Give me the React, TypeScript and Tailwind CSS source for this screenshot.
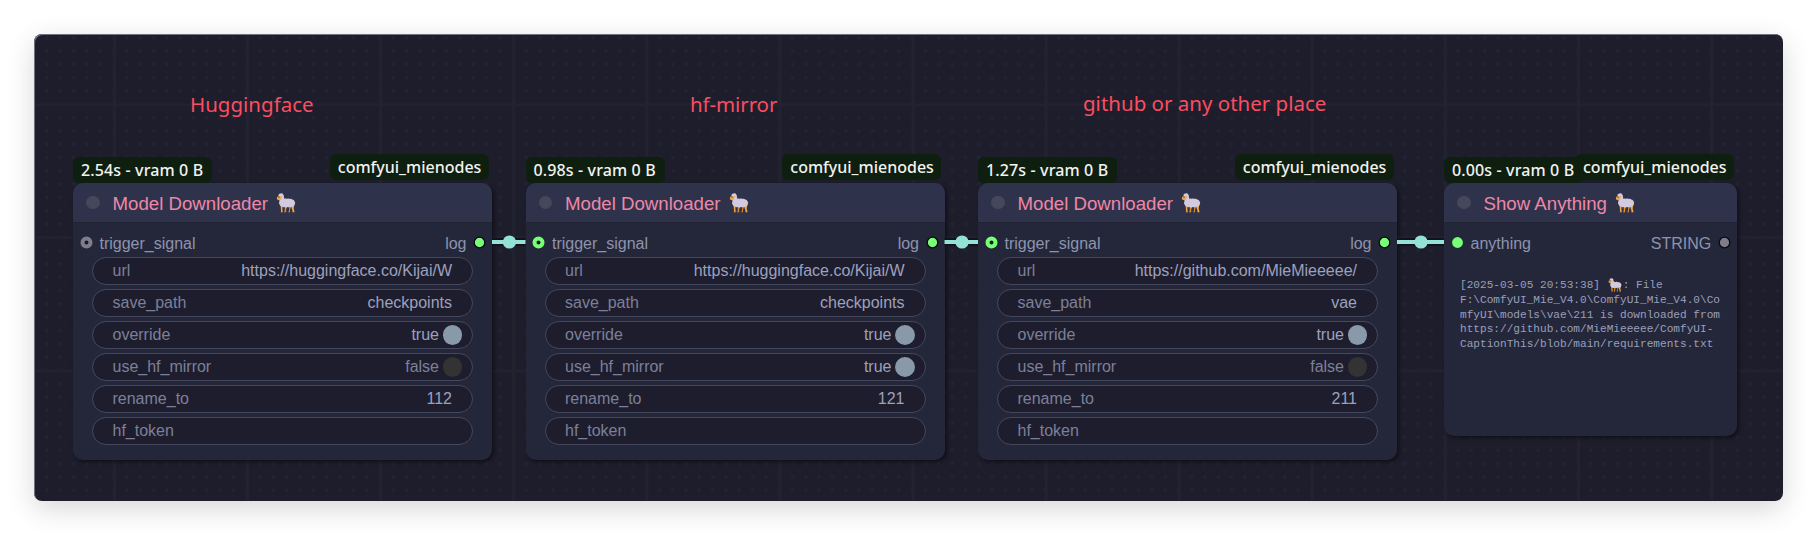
import React from "react";

const Sheep = ({ className }: { className: string }) => (
  <svg viewBox="0 0 20 20" className={className} aria-hidden="true">
    <path d="M4.600 12.500h2l-.2 3 .3 3.700H4.600l.5-.8zM14.800 12.500h3.400l-.5 3 .9 3.700h-2.300l.3-1z" fill="#f4a641" />
    <path d="M8.800 13.500h2.500l-1 2.200-.2 3.500H7.800l.9-1.200zM13.400 13.500h2l-1.300 2.700-.2 3h-1.800l.8-1.200z" fill="#e38c22" />
    <path
      d="M2.400 2.500C2.300 1.300 3.300.5 4.300.8 5.200-.1 6.800.3 7.100 1.400c.9.4 1 1.500.6 2.200.6.800.5 1.600.7 2.300.8-.5 1.700-.5 2.400 0 .9-.6 2-.6 2.800 0 1-.4 2-.2 2.600.5 1.200 0 2.100.8 2.200 1.900.9.6 1 1.800.4 2.600.2 1.200-.6 2.200-1.700 2.400-.8.900-2 1-2.900.4-.8.700-2 .8-2.800.2-.8.700-2 .7-2.800.1-1 .5-2.100.2-2.700-.6-1.200.1-2.100-.7-2.200-1.800-.8-.7-.9-1.800-.3-2.600-.3-1 0-2 .8-2.600V4z"
      fill="#d2cbdf"
    />
    <path d="M1 4.300c.4-.8 1.400-1.200 2.300-1l1.800.9c.1 1.500-.4 2.700-1.500 3-1.200.2-2.400-.2-2.700-1.100z" fill="#f4a641" />
    <path d="M4.600 3l1.700.3-.5 1.400-1.200-.3z" fill="#e7a36b" />
    <circle cx="3" cy="4.500" r=".55" fill="#5a3d28" />
  </svg>
);

const Badge = ({ children, className }: { children: React.ReactNode; className: string }) => (
  <div
    className={`absolute flex h-[26px] items-center whitespace-nowrap rounded-[6px] bg-[#0f1f0f] pb-px font-['Noto_Sans',sans-serif] text-[16px] font-medium text-[#f2f2f2] ${className}`}
  >
    {children}
  </div>
);

const Header = ({ title }: { title: string }) => (
  <div className="flex h-10 shrink-0 items-center rounded-t-[10px] border-b border-[#212334] bg-[#2f324b] pl-[13.300px]">
    <span className="size-[13.500px] rounded-full bg-[#45475a]" />
    <span className="ml-[12.700px] whitespace-nowrap pt-[2px] text-[18.660px] text-[#ee87a7]">{title}</span>
    <Sheep className="ml-[8px] mt-px size-[20px]" />
  </div>
);

type Port = "idle" | "linked" | "plain";

const InPort = ({ kind }: { kind: Port }) => (
  <svg className="size-[13px]" viewBox="-6.500 -6.500 13 13">
    {kind === "plain" ? (
      <circle r="5.400" fill="#7f7" />
    ) : (
      <circle r="4" fill="#1a1a26" stroke={kind === "linked" ? "#7f7" : "#7f7c8c"} strokeWidth="4" />
    )}
  </svg>
);

const OutPort = ({ color }: { color: string }) => (
  <svg className="size-[13px]" viewBox="-6.500 -6.500 13 13">
    <circle r="5.300" fill={color} stroke="#0a0a0e" strokeWidth="1.330" />
  </svg>
);

const Slots = ({ input, output, kind, outColor }: { input: string; output: string; kind: Port; outColor: string }) => (
  <div className="flex h-[34px] shrink-0 items-center pl-[6.800px] pr-[6px] pt-[4px] text-[16px] text-[#8e93ae]">
    <InPort kind={kind} />
    <span className="ml-[6.700px] pt-[4px]">{input}</span>
    <span className="ml-auto mr-[6.800px] pt-[4px]">{output}</span>
    <OutPort color={outColor} />
  </div>
);

const Row = ({ label, value }: { label: string; value: string | boolean }) => (
  <div className="flex h-[27.500px] items-center rounded-full border border-[#45475c] bg-[#1e1d2d] pl-[19.200px] pr-[20px] text-[16px] leading-none text-[#7c8099]">
    <span>{label}</span>
    {typeof value === "boolean" ? (
      <span className={`-mr-[10px] ml-auto flex items-center gap-[3.500px] ${value ? "text-[#9ca1bd]" : "text-[#7c8099]"}`}>
        {String(value)}
        <span className={`size-[19.500px] rounded-full ${value ? "bg-[#8899aa]" : "bg-[#333333]"}`} />
      </span>
    ) : (
      <span className="ml-auto text-[#9ca1bd]">{value}</span>
    )}
  </div>
);

interface DownloaderProps {
  className: string;
  time: string;
  kind: Port;
  url: string;
  path: string;
  mirror: boolean;
  rename: string;
}

const Downloader = ({ className, time, kind, url, path, mirror, rename }: DownloaderProps) => (
  <article
    className={`absolute top-[149px] flex h-[277px] w-[419.300px] flex-col rounded-[10px] bg-[#24273a] shadow-[2px_2px_4px_rgba(0,0,0,0.5)] ${className}`}
  >
    <Badge className="-top-[26px] left-0 w-[139px] pl-2 tracking-[0.130px]">{time} - vram 0 B</Badge>
    <Badge className="-top-[29px] right-[3.500px] w-[159px] pl-2">comfyui_mienodes</Badge>
    <Header title="Model Downloader" />
    <Slots input="trigger_signal" output="log" kind={kind} outColor="#7f7" />
    <div className="flex flex-col gap-[4.500px] px-[19.300px]">
      <Row label="url" value={url} />
      <Row label="save_path" value={path} />
      <Row label="override" value={true} />
      <Row label="use_hf_mirror" value={mirror} />
      <Row label="rename_to" value={rename} />
      <Row label="hf_token" value="" />
    </div>
  </article>
);

const Caption = ({ children, className }: { children: React.ReactNode; className: string }) => (
  <h2 className={`absolute whitespace-nowrap font-['Noto_Sans',sans-serif] text-[20.500px] leading-[28px] text-[#fb4d60] ${className}`}>
    {children}
  </h2>
);

const Grid = () => (
  <svg className="absolute left-px top-px h-[466px] w-[1748px] rounded-[8px]" aria-hidden="true">
    <defs>
      <pattern id="dots" x="5.500" y="9.300" width="13.310" height="13.310" patternUnits="userSpaceOnUse">
        <path d="M6.600 4.700v4M4.600 6.700h4" stroke="#242333" strokeWidth="1.500" />
      </pattern>
      <pattern id="lines" x="78" y="68.200" width="133.100" height="133.100" patternUnits="userSpaceOnUse">
        <path d="M1.500 0v133.100M0 1.500h133.100" stroke="#1e1d2c" strokeWidth="8" />
        <path d="M1.500 0v133.100M0 1.500h133.100" stroke="#232231" strokeWidth="2.700" />
      </pattern>
    </defs>
    <rect width="100%" height="100%" fill="url(#dots)" />
    <rect width="100%" height="100%" fill="url(#lines)" />
  </svg>
);

const links = [
  [458, 491.5, 475.4],
  [910.5, 944, 928],
  [1363, 1410, 1387],
];

const Links = () => (
  <svg className="absolute left-0 top-0 h-full w-full" aria-hidden="true">
    {links.map(([a, b, m]) => (
      <g key={a}>
        <path d={`M${a} 208H${b}`} stroke="#12121b" strokeWidth="8" />
        <path d={`M${a} 208H${b}`} stroke="#94e2d5" strokeWidth="4" />
        <circle cx={m} cy="208" r="6.600" fill="#94e2d5" />
      </g>
    ))}
  </svg>
);

export default function App() {
  return (
    <main className="h-[535px] w-[1817px] overflow-hidden bg-white pl-[34px] pt-[34px] font-['Liberation_Sans',Arial,sans-serif]">
      <section className="relative h-[467px] w-[1749px] rounded-[8px] bg-[#1e1d2c] shadow-[inset_1px_1px_0_#6d7480,0_8px_28px_rgba(0,0,0,0.16)]">
        <Grid />
        <Caption className="left-[156px] top-[56px]">Huggingface</Caption>
        <Caption className="left-[656px] top-[56px] tracking-[-0.100px]">hf-mirror</Caption>
        <Caption className="left-[1049px] top-[55px]">github or any other place</Caption>

        <Downloader className="left-[39px]" time="2.54s" kind="idle" url="https://huggingface.co/Kijai/W" path="checkpoints" mirror={false} rename="112" />
        <Downloader className="left-[491.500px]" time="0.98s" kind="linked" url="https://huggingface.co/Kijai/W" path="checkpoints" mirror={true} rename="121" />
        <Downloader className="left-[944px]" time="1.27s" kind="linked" url="https://github.com/MieMieeeee/" path="vae" mirror={false} rename="211" />

        <article className="absolute left-[1410px] top-[149px] flex h-[253px] w-[293px] flex-col rounded-[10px] bg-[#24273a] shadow-[2px_2px_4px_rgba(0,0,0,0.5)]">
          <Badge className="-top-[26px] left-0 w-[139px] pl-2 tracking-[0.130px]">0.00s - vram 0 B</Badge>
          <Badge className="-top-[29px] right-[3px] w-[159px] pl-2">comfyui_mienodes</Badge>
          <Header title="Show Anything" />
          <Slots input="anything" output="STRING" kind="plain" outColor="#7f7c8c" />
          <div className="whitespace-pre pl-4 pt-[20px] font-['Liberation_Mono',monospace] text-[11.110px] leading-[14.700px] text-[#9a9fbb]">
            <div className="flex h-4 items-center">
              {"[2025-03-05 20:53:38] "}
              <Sheep className="mx-[1px] size-[14px]" />
              {": File"}
            </div>
            <div>{"F:\\ComfyUI_Mie_V4.0\\ComfyUI_Mie_V4.0\\Co"}</div>
            <div>{"mfyUI\\models\\vae\\211 is downloaded from"}</div>
            <div>https://github.com/MieMieeeee/ComfyUI-</div>
            <div>CaptionThis/blob/main/requirements.txt</div>
          </div>
        </article>
        <Links />
      </section>
    </main>
  );
}
